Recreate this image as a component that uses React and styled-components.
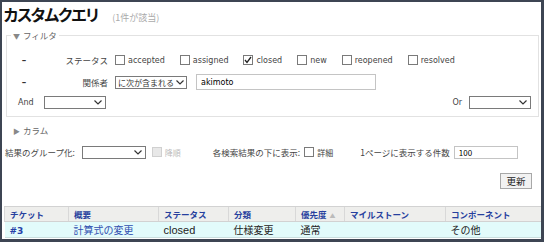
import React from "react";
import styled, { createGlobalStyle } from "styled-components";

const GlobalStyle = createGlobalStyle`
  html, body { margin: 0; padding: 0; background: #fff; }
  body {
    font-family: "DejaVu Sans", "Noto Sans CJK JP", sans-serif;
    font-size: 8px;
    color: #484848;
  }
`;

const JP = `"Noto Sans CJK JP", sans-serif`;

const Frame = styled.div`
  box-sizing: border-box;
  width: 544px;
  height: 242px;
  border-style: solid;
  border-color: #3d4553;
  border-width: 2px 3px 3px 2px;
  display: flex;
  flex-direction: column;
  overflow: hidden;
`;

const TitleRow = styled.div`
  height: 27px;
  display: flex;
  align-items: baseline;
  gap: 14px;
  padding-left: 1px;
`;

const Title = styled.h2`
  margin: 0;
  font-family: ${JP};
  font-size: 16px;
  font-weight: 700;
  letter-spacing: -2.4px;
  line-height: 25px;
  color: #111;
`;

const Count = styled.span`
  font-family: ${JP};
  font-size: 9px;
  color: #aaa;
`;

const Fieldset = styled.fieldset`
  margin: 0 2px 0 4px;
  padding: 10px 0 6px 0;
  border: 1px solid #e2e2e2;
  min-width: 0;
  display: flex;
  flex-direction: column;
  gap: 6px;
`;

const Legend = styled.legend`
  margin-left: 4px;
  padding: 0 2px;
  font-family: ${JP};
  font-size: 8.5px;
  line-height: 12px;
  color: #666;
`;

const Arrow = styled.span`
  font-size: 7px;
  color: #888;
  margin-right: 3px;
`;

const FilterRow = styled.div`
  display: flex;
  align-items: center;
  height: 16px;
`;

const Remove = styled.span`
  margin-left: 13px;
  width: 8px;
  font-size: 9px;
  font-weight: 700;
  color: #333;
  text-align: center;
`;

const FieldLabel = styled.span`
  width: 80px;
  margin-right: 7px;
  text-align: right;
  font-family: ${JP};
  font-size: 8.5px;
  color: #444;
`;

const CheckItem = styled.label`
  display: inline-flex;
  align-items: center;
  gap: 3px;
  margin-right: ${(p) => (p.$last ? 0 : 15)}px;
  margin-left: ${(p) => p.$ml || 0}px;
  font-size: 8px;
  color: ${(p) => (p.$disabled ? "#bbb" : "#444")};
  font-family: "DejaVu Sans", "Noto Sans CJK JP", sans-serif;
  white-space: nowrap;
`;

const Box = styled.span`
  box-sizing: border-box;
  width: 10px;
  height: 10px;
  border: 1px solid ${(p) => (p.$disabled ? "#d0d0d0" : "#7a7a7a")};
  background: ${(p) => (p.$disabled ? "#e8e8e8" : "#fff")};
  display: inline-flex;
  align-items: center;
  justify-content: center;
`;

const SelectBox = styled.div`
  box-sizing: border-box;
  width: ${(p) => p.$w}px;
  height: 13px;
  margin-left: ${(p) => p.$ml || 0}px;
  border: 1px solid #7a7a7a;
  background: #fff;
  display: flex;
  align-items: center;
  justify-content: space-between;
  gap: 2px;
  padding: 0 3px 0 2px;
  font-family: ${JP};
  font-size: 8px;
  color: #333;
  white-space: nowrap;
  overflow: hidden;
`;

const TextInput = styled.div`
  box-sizing: border-box;
  width: ${(p) => p.$w}px;
  height: ${(p) => p.$h}px;
  margin-left: ${(p) => p.$ml || 0}px;
  border: 1px solid #c4c4c4;
  background: #fff;
  display: flex;
  align-items: center;
  padding-left: 4px;
  font-size: 8px;
  color: #000;
`;

const Spread = styled.div`
  display: flex;
  align-items: center;
  justify-content: space-between;
  height: 16px;
  padding: 0 7px 0 11px;
  margin-top: -2px;
`;

const Group = styled.div`
  display: flex;
  align-items: center;
`;

const Small = styled.span`
  font-size: 8px;
  color: #444;
`;

const Collapsed = styled.div`
  margin-top: 7px;
  height: 12px;
  line-height: 12px;
  padding-left: 11px;
  font-family: ${JP};
  font-size: 8.5px;
  color: #666;
`;

const OptionsRow = styled.div`
  margin-top: 9px;
  height: 14px;
  display: flex;
  align-items: center;
  padding-left: 3px;
  font-family: ${JP};
  font-size: 8.5px;
  color: #444;
`;

const OptLabel = styled.span`
  margin-left: ${(p) => p.$ml || 0}px;
  white-space: nowrap;
`;

const ButtonRow = styled.div`
  margin-top: 14px;
  display: flex;
  justify-content: flex-end;
  padding-right: 9px;
`;

const Button = styled.button`
  box-sizing: border-box;
  height: 16px;
  width: 32px;
  padding: 0;
  border: 1px solid #a8a8a8;
  background: #f2f2f2;
  font-family: ${JP};
  font-size: 9.5px;
  line-height: 14px;
  color: #222;
`;

const Table = styled.table`
  margin: 17px 0 0 2px;
  width: 537px;
  border-collapse: collapse;
  table-layout: fixed;
`;

const Th = styled.th`
  height: 14px;
  padding: 0 0 0 5px;
  text-align: left;
  background: #eeeeec;
  border-top: 1px solid #d2d2d2;
  border-bottom: 1px solid #d2d2d2;
  border-left: 1px solid #d8d8d8;
  font-family: ${JP};
  font-size: 8.5px;
  font-weight: 700;
  color: #263f9e;
  white-space: nowrap;
`;

const SortMark = styled.span`
  color: #bbb;
  font-size: 6px;
  font-weight: 400;
  margin-left: 3px;
`;

const Td = styled.td`
  height: 15px;
  padding: 0 0 0 5px;
  background: #e2fbfb;
  border-bottom: 1px solid #c9dede;
  font-family: ${(p) => (p.$latin ? `"Liberation Sans", sans-serif` : JP)};
  font-size: ${(p) => (p.$latin ? 11 : 10)}px;
  color: ${(p) => (p.$link ? "#2f4fb0" : "#222")};
  white-space: nowrap;
  overflow: hidden;
`;

const IdLink = styled.span`
  font-family: "DejaVu Sans", sans-serif;
  font-size: 9px;
  font-weight: 700;
  color: #2740a8;
`;

function Chevron() {
  return (
    <svg width="8" height="5" viewBox="0 0 8 5" style={{ flex: "none" }}>
      <polyline points="0.5,0.5 4,4 7.5,0.5" fill="none" stroke="#333" strokeWidth="1.2" />
    </svg>
  );
}

function Check({ label, checked, disabled, last, ml }) {
  return (
    <CheckItem $last={last} $disabled={disabled} $ml={ml}>
      <Box $disabled={disabled}>
        {checked && (
          <svg width="8" height="8" viewBox="0 0 8 8">
            <polyline points="1,4 3,6.5 7,1" fill="none" stroke="#222" strokeWidth="1.3" />
          </svg>
        )}
      </Box>
      {label}
    </CheckItem>
  );
}

function Select({ w, ml, value }) {
  return (
    <SelectBox $w={w} $ml={ml}>
      <span>{value}</span>
      <Chevron />
    </SelectBox>
  );
}

const statuses = ["accepted", "assigned", "closed", "new", "reopened", "resolved"];

const columns = [
  { w: 64, label: "チケット" },
  { w: 90, label: "概要" },
  { w: 70, label: "ステータス" },
  { w: 67, label: "分類" },
  { w: 49, label: "優先度", sort: true },
  { w: 101, label: "マイルストーン" },
  { w: 96, label: "コンポーネント" },
];

export default function App() {
  return (
    <>
      <GlobalStyle />
      <Frame>
        <TitleRow>
          <Title>カスタムクエリ</Title>
          <Count>(1件が該当)</Count>
        </TitleRow>

        <Fieldset>
          <Legend>
            <Arrow>▼</Arrow>フィルタ
          </Legend>
          <FilterRow>
            <Remove>–</Remove>
            <FieldLabel>ステータス</FieldLabel>
            {statuses.map((s, i) => (
              <Check key={s} label={s} checked={s === "closed"} last={i === statuses.length - 1} />
            ))}
          </FilterRow>
          <FilterRow>
            <Remove>–</Remove>
            <FieldLabel>関係者</FieldLabel>
            <Select w={72} value="に次が含まれる" />
            <TextInput $w={180} $h={16} $ml={9}>akimoto</TextInput>
          </FilterRow>
          <Spread>
            <Group>
              <Small>And</Small>
              <Select w={62} ml={10} value="" />
            </Group>
            <Group>
              <Small>Or</Small>
              <Select w={62} ml={7} value="" />
            </Group>
          </Spread>
        </Fieldset>

        <Collapsed>
          <Arrow>▶</Arrow>カラム
        </Collapsed>

        <OptionsRow>
          <OptLabel>結果のグループ化:</OptLabel>
          <Select w={64} ml={7} value="" />
          <Check label="降順" disabled last ml={6} />
          <OptLabel $ml={32}>各検索結果の下に表示:</OptLabel>
          <Check label="詳細" last ml={4} />
          <OptLabel $ml={27}>1ページに表示する件数</OptLabel>
          <TextInput $w={64} $h={13} $ml={4}>100</TextInput>
        </OptionsRow>

        <ButtonRow>
          <Button>更新</Button>
        </ButtonRow>

        <Table>
          <colgroup>
            {columns.map((c) => (
              <col key={c.label} style={{ width: c.w }} />
            ))}
          </colgroup>
          <thead>
            <tr>
              {columns.map((c) => (
                <Th key={c.label}>
                  {c.label}
                  {c.sort && <SortMark>▲</SortMark>}
                </Th>
              ))}
            </tr>
          </thead>
          <tbody>
            <tr>
              <Td><IdLink>#3</IdLink></Td>
              <Td $link>計算式の変更</Td>
              <Td $latin>closed</Td>
              <Td>仕様変更</Td>
              <Td>通常</Td>
              <Td></Td>
              <Td>その他</Td>
            </tr>
          </tbody>
        </Table>
      </Frame>
    </>
  );
}
